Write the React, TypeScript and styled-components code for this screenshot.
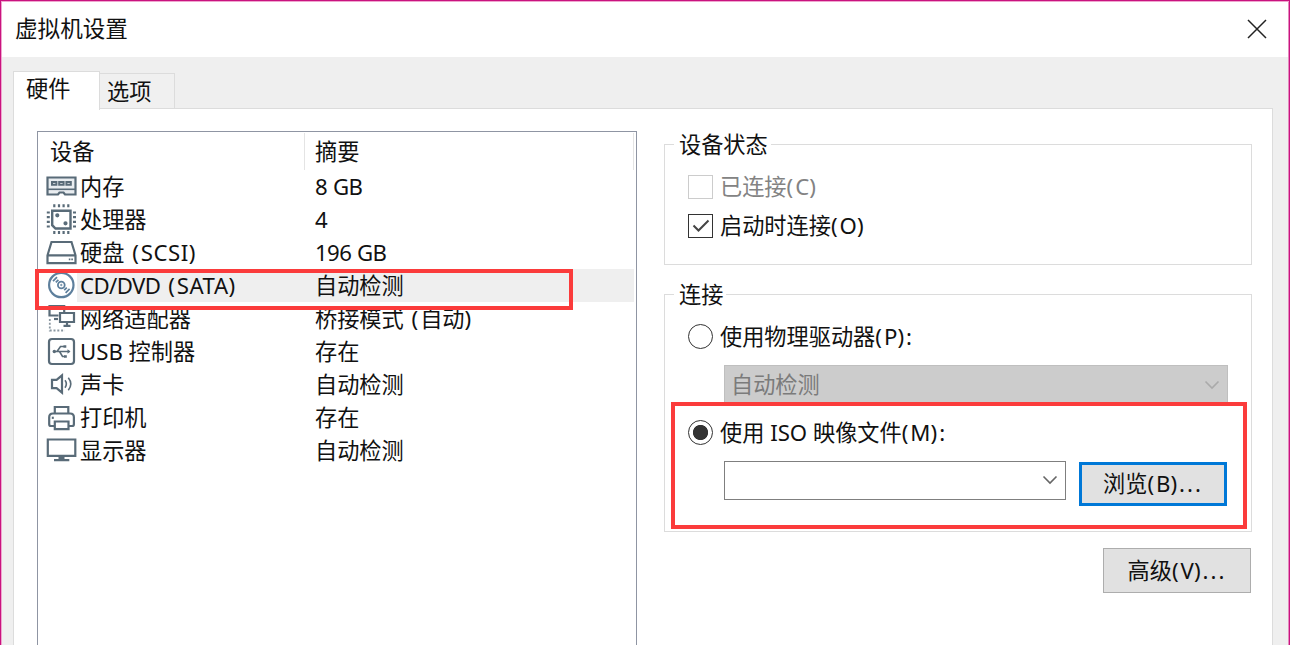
import React from 'react';
import styled, { createGlobalStyle, css } from 'styled-components';

const GlobalStyle = createGlobalStyle`
  * { box-sizing: border-box; }
  body {
    margin: 0;
    overflow: hidden;
    font-family: "Noto Sans", "Noto Sans CJK SC", sans-serif;
    font-size: 22.2px;
    line-height: 33px;
    color: #111;
    white-space: nowrap;
  }
`;

const Dialog = styled.div`
  position: relative;
  display: flex;
  flex-direction: column;
  width: 1290px;
  height: 645px;
  overflow: hidden;
  background: #efefef;
  border: 1px solid #c9137f;
  border-bottom: 0;
  box-shadow: inset 1px 1px 0 #f0a5cf, inset -1px 0 0 #e58abf;
`;

const TitleBar = styled.header`
  display: flex;
  flex: none;
  justify-content: space-between;
  align-items: center;
  height: 55px;
  margin: 1px 1px 0;
  padding: 0 20px 2px 13px;
  background: #fff;
`;

const Title = styled.h1`
  margin: 0;
  font-size: 22.6px;
  font-weight: 400;
`;

const CloseIcon = styled.svg`
  width: 22px;
  height: 22px;
  stroke: #222;
  stroke-width: 1.5;
`;

const TabStrip = styled.nav`
  display: flex;
  flex: none;
  align-items: flex-end;
  height: 51px;
  padding-left: 12px;
`;

const Tab = styled.div<{ $active?: boolean }>`
  width: ${p => (p.$active ? 87 : 75)}px;
  height: ${p => (p.$active ? 39 : 35)}px;
  padding-left: ${p => (p.$active ? 12 : 7)}px;
  border: 1px solid #dcdcdc;
  border-bottom: 0;
  ${p =>
    p.$active
      ? css`
          z-index: 1;
          margin-bottom: -2px;
          background: #fff;
          line-height: 34px;
        `
      : css`
          border-left: 0;
          background: #f0f0f0;
          line-height: 36px;
        `}
`;

const Panel = styled.main`
  display: flex;
  flex: none;
  align-items: flex-start;
  width: 1260px;
  height: 560px;
  margin-left: 12px;
  padding: 22px 0 0 23px;
  background: #fff;
  border: 1px solid #dcdcdc;
`;

const DeviceList = styled.section`
  width: 600px;
  height: 540px;
  padding: 0 2px 0 7px;
  background: #fff;
  border: 1.5px solid #8f95a3;
`;

const ListHeader = styled.div`
  display: flex;
  height: 38px;
  line-height: 38px;
`;

const HeaderCell = styled.div<{ $grow?: boolean }>`
  width: ${p => (p.$grow ? 'auto' : '260px')};
  flex: ${p => (p.$grow ? 1 : 'none')};
  height: 37px;
  margin-top: 1px;
  padding-left: ${p => (p.$grow ? 10 : 5)}px;
  border-right: 1px solid #e4e4e4;
`;

const DeviceRow = styled.div`
  display: flex;
  height: 33px;
`;

const RowBody = styled.div<{ $selected?: boolean }>`
  display: flex;
  flex: 1;
  padding-left: 3px;
  background: ${p => (p.$selected ? '#efefef' : 'transparent')};
`;

const DeviceName = styled.span`
  width: 235px;
`;

const Glyph = styled.svg<{ $tint?: string }>`
  width: 32px;
  height: 33px;
  fill: none;
  stroke: ${p => p.$tint || '#596b78'};
  stroke-width: 2.2;
`;

const Settings = styled.section`
  display: flex;
  flex-direction: column;
  align-items: flex-end;
  width: 588px;
  margin: 0 0 0 27px;
`;

const Group = styled.fieldset<{ $h: number }>`
  width: 588px;
  height: ${p => p.$h}px;
  min-width: 0;
  margin: 0 0 16px;
  padding: 0 0 0 23px;
  border: 1px solid #dcdcdc;
`;

const Legend = styled.legend`
  height: 26px;
  margin-left: -14px;
  padding: 0 3px 0 5px;
  line-height: 28px;
`;

const Option = styled.label<{ $disabled?: boolean; $h: number }>`
  display: flex;
  align-items: center;
  gap: 7px;
  height: ${p => p.$h}px;
  color: ${p => (p.$disabled ? '#838383' : '#111')};
`;

const CheckBox = styled.span<{ $disabled?: boolean }>`
  display: grid;
  place-items: center;
  width: 25px;
  height: 24px;
  border: 1.5px solid ${p => (p.$disabled ? '#ccc' : '#333')};
`;

const Radio = styled.span<{ $on?: boolean }>`
  width: 25px;
  height: 25px;
  border: 1.5px solid #333;
  border-radius: 50%;
  background: ${p => (p.$on ? 'radial-gradient(circle, #333 7.2px, #fff 8px)' : '#fff')};
`;

const Select = styled.div<{ $disabled?: boolean }>`
  display: flex;
  justify-content: space-between;
  align-items: center;
  width: ${p => (p.$disabled ? 504 : 342)}px;
  height: ${p => (p.$disabled ? 40 : 39)}px;
  margin-left: 36px;
  padding: 0 7px 1px 6px;
  color: #7b7b7b;
  background: ${p => (p.$disabled ? '#ccc' : '#fff')};
  border: 1px solid ${p => (p.$disabled ? '#bfbfbf' : '#7f7f7f')};
`;

const FileRow = styled.div`
  display: flex;
  margin-top: 2px;
`;

const Button = styled.button<{ $focused?: boolean }>`
  width: 148px;
  height: ${p => (p.$focused ? 44 : 45)}px;
  margin: ${p => (p.$focused ? '1px 0 0 13px' : '0 1px 0 0')};
  padding: 0 0 1px;
  font: inherit;
  color: #111;
  background: #e1e1e1;
  border: ${p => (p.$focused ? '3px solid #0078d7' : '1.5px solid #adadad')};
`;

const Marker = styled.div<{ $x: number; $y: number; $w: number; $h: number }>`
  position: absolute;
  z-index: 2;
  left: ${p => p.$x - 1}px;
  top: ${p => p.$y - 1}px;
  width: ${p => p.$w}px;
  height: ${p => p.$h}px;
  border: 4px solid #fb3b3b;
`;

const Run = styled.span<{ $spacing: number }>`
  letter-spacing: ${p => p.$spacing}px;
`;

const spacingOf = (part: string) => {
  if (/[().:]/.test(part)) return 2;
  if (/^S[AC]/.test(part)) return 0.5;
  return -0.6;
};

/* Punctuation is set a little wider and figures a little tighter than the font's own widths. */
const Label = ({ text }: { text: string }) => (
  <span>
    {text.split(/( ?[().:]+|\d+|GB|SATA|SCSI|CD\/DVD)/).map((part, i) =>
      i % 2 === 0 ? part : <Run key={i} $spacing={spacingOf(part)}>{part}</Run>,
    )}
  </span>
);

const Chevron = ({ color }: { color: string }) => (
  <svg width="16" height="10" viewBox="0 0 16 10" fill="none" stroke={color} strokeWidth="1.6">
    <path d="M1.5 1.5 8 8l6.5-6.5" />
  </svg>
);

const devices: { name: string; summary: string; tint?: string; selected?: boolean; icon: React.ReactNode }[] = [
  {
    name: '内存',
    summary: '8 GB',
    icon: (
      <>
        <path fill="#e9edf0" d="M2.5 7.5h28v17H20l-1.5-2h-4l-1.5 2H2.5z" />
        <path d="M2.5 19.3h28" strokeWidth="1.6" />
        <path strokeWidth="2" d="M7 11.9h4.4v2.8H7zM14.2 11.9h4.4v2.8h-4.4zM21.4 11.9h4.4v2.8h-4.4z" />
      </>
    ),
  },
  {
    name: '处理器',
    summary: '4',
    icon: (
      <>
        <path strokeWidth="2.4" d="M7.2 7.7h18.3v17.8H10.5l-3.3-3.3z" />
        <path d="M9.3 1.3v3M14 1.3v3M18.6 1.3v3M23.3 1.3v3M9.3 28v3M14 28v3M18.6 28v3M23.3 28v3M1.8 9.5h3M1.8 14.2h3M1.8 18.8h3M1.8 23.5h3M28 9.5h3M28 14.2h3M28 18.8h3M28 23.5h3" />
        <circle cx="12.3" cy="12.3" r="1" />
        <circle cx="20.5" cy="20.3" r="1" />
      </>
    ),
  },
  {
    name: '硬盘 (SCSI)',
    summary: '196 GB',
    icon: (
      <>
        <path d="M6.5 6h20l4 13.3v7.9h-28v-7.9zM2.5 19.3h28" />
        <path strokeWidth="1.8" d="M23.8 23.3h1.6M26.3 23.3h1.6" />
      </>
    ),
  },
  {
    name: 'CD/DVD (SATA)',
    summary: '自动检测',
    tint: '#5d7f9c',
    selected: true,
    icon: (
      <>
        <circle cx="16.3" cy="16" r="12.2" />
        <circle cx="16.3" cy="16" r="3.4" strokeWidth="1.8" />
        <circle cx="16.3" cy="16" r="0.7" strokeWidth="1" />
        <path d="M8 12.2l4-4M10.8 13.4l2.6-2.6M24.600 19.800l-4 4M21.800 18.600l-2.600 2.600" strokeWidth="1.7" />
      </>
    ),
  },
  {
    name: '网络适配器',
    summary: '桥接模式 (自动)',
    icon: (
      <>
        <path d="M13.5 13.500H4.500V4h14.700v6" />
        <path d="M15 11h14v9H15zM22 20v3M18.500 23.800h7" />
        <path d="M9 17h4" />
        <path strokeDasharray="2 1.8" d="M4.800 17v11.500H20" strokeWidth="1.8" stroke="#8a97a1" />
      </>
    ),
  },
  {
    name: 'USB 控制器',
    summary: '存在',
    icon: (
      <>
        <rect x="4" y="4" width="25" height="25" rx="3" />
        <path strokeWidth="1.6" d="M10 16.500h14.500M12 16.500l3.500-5H19M14.500 16.500l3 5H20" />
        <path fill="#596b78" stroke="none" d="M22.500 14.300l3 2.200-3 2.200zM18.500 10.200h2.800v2.600h-2.800zM19 20.200h2.800v2.600H19z" />
        <circle cx="9.300" cy="16.500" r="1.700" fill="#596b78" stroke="none" />
      </>
    ),
  },
  {
    name: '声卡',
    summary: '自动检测',
    icon: (
      <>
        <path d="M7 11.800h4.600L17 7.400v17.200l-5.400-4.400H7z" />
        <path strokeWidth="1.6" d="M20 12.300q2.700 3.700 0 7.400M23.300 9.800q5 6.200 0 12.400" />
      </>
    ),
  },
  {
    name: '打印机',
    summary: '存在',
    icon: (
      <>
        <path d="M9.800 12.500V6H23.300v6.500M9.300 25H6q-1.800 0-1.800-1.800v-7q0-3.700 3.700-3.700h17.300q3.700 0 3.700 3.700v7Q28.900 25 27 25h-3M9.800 20.500h13.700v7.700H9.800z" />
        <path d="M6.800 16.800h2" />
      </>
    ),
  },
  {
    name: '显示器',
    summary: '自动检测',
    icon: (
      <>
        <path d="M2.800 5.500h27.500v16.300H2.800z" />
        <path d="M13.500 24h6M9 26.200h15.300" />
      </>
    ),
  },
];

export default function App() {
  return (
    <>
      <GlobalStyle />
      <Dialog>
        <TitleBar>
          <Title>虚拟机设置</Title>
          <CloseIcon viewBox="0 0 22 22">
            <path d="M2 2l18 18M20 2L2 20" />
          </CloseIcon>
        </TitleBar>
        <TabStrip>
          <Tab $active>硬件</Tab>
          <Tab>选项</Tab>
        </TabStrip>
        <Panel>
          <DeviceList>
            <ListHeader>
              <HeaderCell>设备</HeaderCell>
              <HeaderCell $grow>摘要</HeaderCell>
            </ListHeader>
            {devices.map(d => (
              <DeviceRow key={d.name}>
                <Glyph viewBox="0 0 32 33" $tint={d.tint}>{d.icon}</Glyph>
                <RowBody $selected={d.selected}>
                  <DeviceName><Label text={d.name} /></DeviceName>
                  <Label text={d.summary} />
                </RowBody>
              </DeviceRow>
            ))}
          </DeviceList>
          <Settings>
            <Group $h={134}>
              <Legend>设备状态</Legend>
              <Option $h={59} $disabled>
                <CheckBox $disabled />
                <Label text="已连接(C)" />
              </Option>
              <Option $h={19}>
                <CheckBox>
                  <svg width="18" height="14" viewBox="0 0 18 14" fill="none" stroke="#444" strokeWidth="2">
                    <path d="M1.5 6.5l5 5L16.5 1.5" />
                  </svg>
                </CheckBox>
                <Label text="启动时连接(O)" />
              </Option>
            </Group>
            <Group $h={251}>
              <Legend>连接</Legend>
              <Option $h={58}>
                <Radio />
                <Label text="使用物理驱动器(P):" />
              </Option>
              <Select $disabled>
                自动检测
                <Chevron color="#aaa" />
              </Select>
              <Option $h={54}>
                <Radio $on />
                <Label text="使用 ISO 映像文件(M):" />
              </Option>
              <FileRow>
                <Select>
                  <span />
                  <Chevron color="#666" />
                </Select>
                <Button $focused><Label text="浏览(B)..." /></Button>
              </FileRow>
            </Group>
            <Button><Label text="高级(V)..." /></Button>
          </Settings>
        </Panel>
        <Marker $x={35} $y={269} $w={538} $h={41} />
        <Marker $x={671} $y={402} $w={576} $h={127} />
      </Dialog>
    </>
  );
}
